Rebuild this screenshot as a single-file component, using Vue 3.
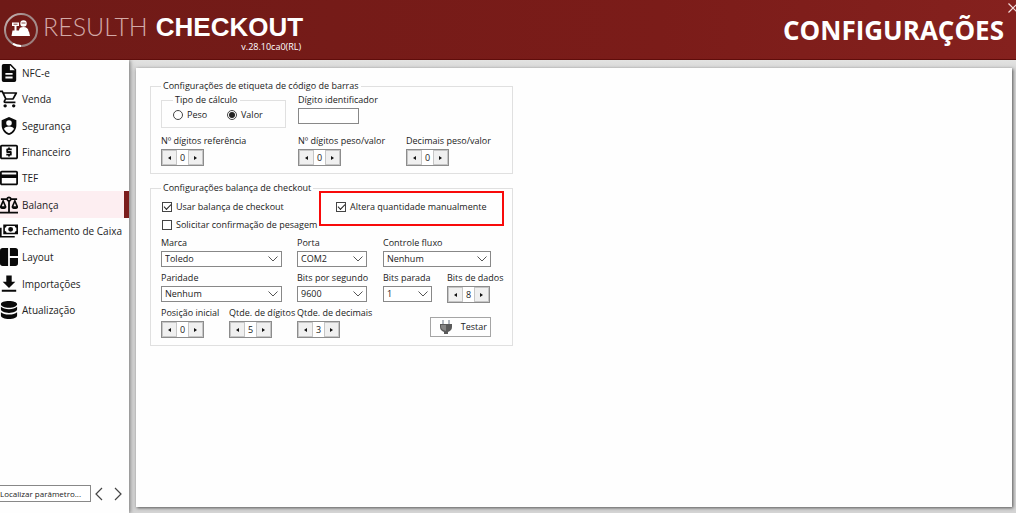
<script setup>
import { ref } from 'vue'

const items = [
  { label: 'NFC-e', box: '3 2 18 20', d: 'M14 2H6a2 2 0 0 0-2 2v16a2 2 0 0 0 2 2h12a2 2 0 0 0 2-2V8l-6-6zm2 16H8v-2h8v2zm0-4H8v-2h8v2zm-3-5V3.5L18.500 9H13z' },
  { label: 'Venda', box: '1 1.500 21 21', d: 'M15.550 13c.75 0 1.410-.41 1.750-1.030l3.580-6.490A.996.996 0 0 0 20.010 4H5.210l-.94-2H1v2h2l3.600 7.590-1.350 2.440C4.520 15.370 5.480 17 7 17h12v-2H7l1.100-2h7.450zM6.160 6h12.150l-2.760 5H8.530L6.160 6zM7 18a2 2 0 1 0 0 4 2 2 0 0 0 0-4zm10 0a2 2 0 1 0 0 4 2 2 0 0 0 0-4z' },
  { label: 'Segurança', box: '2 1 20 22', d: 'M12 1 3 5v6c0 5.550 3.840 10.740 9 12 5.160-1.260 9-6.450 9-12V5l-9-4m0 4a3.300 3.300 0 0 1 0 6.800A3.300 3.300 0 0 1 12 5m5.130 12A9.700 9.700 0 0 1 12 20.920 9.700 9.700 0 0 1 6.870 17c-.34-.5-.63-1-.87-1.530 0-1.650 2.710-3 6-3s6 1.320 6 3c-.24.53-.53 1.030-.87 1.530' },
  { label: 'Financeiro', box: '2 2 20 20', d: 'M11 17h2v-1h1c.55 0 1-.45 1-1v-3c0-.55-.45-1-1-1h-3v-1h4V8h-2V7h-2v1h-1c-.55 0-1 .45-1 1v3c0 .55.450 1 1 1h3v1H9v2h2v1zm9-13H4c-1.110 0-2 .89-2 2v12c0 1.110.890 2 2 2h16c1.110 0 2-.89 2-2V6c0-1.110-.89-2-2-2zm0 14H4V6h16v12z' },
  { label: 'TEF', box: '2 2 20 20', d: 'M20 4H4c-1.110 0-2 .89-2 2v12c0 1.110.890 2 2 2h16c1.110 0 2-.89 2-2V6c0-1.110-.89-2-2-2zm0 14H4v-6h16v6zm0-10H4V6h16v2z' },
  { label: 'Balança', box: '2 2.500 20 20', d: 'M12 3c-1.270 0-2.400.8-2.820 2H3v2h1.950L2 14c-.47 2 1 3 3.500 3S9.560 16 9 14L6.050 7h3.120c.33.85.98 1.500 1.830 1.830V20H2v2h20v-2h-9V8.820c.85-.32 1.500-.97 1.820-1.820h3.130L15 14c-.47 2 1 3 3.500 3s4.060-1 3.500-3l-2.950-7H21V5h-6.170C14.400 3.800 13.270 3 12 3m0 2a1 1 0 1 1 0 2 1 1 0 0 1 0-2m-6.500 5.250L7 14H4l1.500-3.750m13 0L20 14h-3l1.500-3.750z' },
  { label: 'Fechamento de Caixa', box: '1 3 22 22', d: 'M5 6h18v12H5V6m9 3a3 3 0 1 1 0 6 3 3 0 0 1 0-6M9 8a2 2 0 0 1-2 2v4a2 2 0 0 1 2 2h10a2 2 0 0 1 2-2v-4a2 2 0 0 1-2-2H9m-8 2h2v10h16v2H1V10z' },
  { label: 'Layout', box: '2 2 20 20', d: 'M5 2h6v20H5a3 3 0 0 1-3-3V5a3 3 0 0 1 3-3zm8 0h6a3 3 0 0 1 3 3v6h-9V2zm0 11h9v6a3 3 0 0 1-3 3h-6v-9z' },
  { label: 'Importações', box: '2 2 20 19', d: 'M4 20h16v-2H4v2zM19 9h-4V2H9v7H5l7 7 7-7z' },
  { label: 'Atualização', box: '2 2 20 20', d: 'M12 2c5 0 9 1.500 9 3.500S17 9.500 12 9.500 3 7.800 3 5.500 7 2 12 2zM3 8.500c2 1.800 5 2.600 9 2.600s7-.8 9-2.600v2.700c0 2.200-4 4-9 4s-9-1.800-9-4V8.500zm0 6c2 1.800 5 2.600 9 2.600s7-.8 9-2.600V18c0 2.300-4 4-9 4s-9-1.700-9-4v-3.500z' }
]
const active = ref('Balança')
const kind = ref('valor')
const useScale = ref(true)
const confirmWeight = ref(false)
const changeQty = ref(true)

const labelSpinners = ref([
  { id: 'ref', label: 'Nº dígitos referência', value: 0 },
  { id: 'pv', label: 'Nº dígitos peso/valor', value: 0 },
  { id: 'dec', label: 'Decimais peso/valor', value: 0 }
])
const fields = ref([
  { id: 'marca', type: 'select', label: 'Marca', value: 'Toledo' },
  { id: 'porta', type: 'select', label: 'Porta', value: 'COM2' },
  { id: 'fluxo', type: 'select', label: 'Controle fluxo', value: 'Nenhum' },
  { id: 'paridade', type: 'select', label: 'Paridade', value: 'Nenhum' },
  { id: 'bps', type: 'select', label: 'Bits por segundo', value: '9600' },
  { id: 'parada', type: 'select', label: 'Bits parada', value: '1' },
  { id: 'dados', type: 'spin', label: 'Bits de dados', value: 8 },
  { id: 'posicao', type: 'spin', label: 'Posição inicial', value: 0 },
  { id: 'digitos', type: 'spin', label: 'Qtde. de dígitos', value: 5 },
  { id: 'decimais', type: 'spin', label: 'Qtde. de decimais', value: 3 }
])
</script>

<template>
  <div class="app">
    <header class="top">
      <svg class="logo" viewBox="0 0 36 36" aria-hidden="true">
        <defs>
          <linearGradient id="ring" x1="0" y1="0" x2="1" y2="1">
            <stop offset="0" stop-color="#d5c5c4" />
            <stop offset=".35" stop-color="#9b8584" />
            <stop offset=".6" stop-color="#a58e8d" />
            <stop offset="1" stop-color="#967674" />
          </linearGradient>
        </defs>
        <circle cx="18" cy="18" r="16" fill="none" stroke="url(#ring)" stroke-width="2" />
        <path d="M10 31.800A16 16 0 0 0 18 34" fill="none" stroke="#fff" stroke-width="2" />
        <circle cx="20.500" cy="11.500" r="3.200" fill="#fff" />
        <path d="M9 10.500h7v3.500h-2.500v4.500H16c0-2.500 1.500-3.500 4.500-3.500s5 1.500 5 4.500h.5l1 4.500H8.500l1-5.500h2V14H9z" fill="#fff" />
        <path d="M10.500 12.200h4M18.500 11h4" stroke="#8a4b48" stroke-width="1" />
      </svg>
      <div class="brand">
        <div class="name"><span class="thin">RESULTH</span><strong>CHECKOUT</strong></div>
        <div class="version">v.28.10ca0(RL)</div>
      </div>
      <h1>CONFIGURAÇÕES</h1>
      <button class="close" type="button" aria-label="Fechar">
        <svg viewBox="0 0 10 10"><path d="M.5.5l9 9M9.500.5l-9 9" /></svg>
      </button>
    </header>

    <div class="body">
      <aside class="side">
        <nav>
          <a v-for="it in items" :key="it.label" href="#" :class="{ active: it.label === active }" @click.prevent="active = it.label">
            <svg :viewBox="it.box" aria-hidden="true"><path :d="it.d" fill-rule="evenodd" /></svg>
            <span>{{ it.label }}</span>
          </a>
        </nav>
        <div class="search">
          <input type="text" aria-label="Localizar parâmetro" placeholder="Localizar parâmetro..." />
          <button type="button" aria-label="Anterior"><svg viewBox="0 0 8 14"><path d="M7 1 1 7l6 6" /></svg></button>
          <button type="button" aria-label="Próximo"><svg viewBox="0 0 8 14"><path d="m1 1 6 6-6 6" /></svg></button>
        </div>
      </aside>

      <main class="panel">
        <fieldset class="group">
          <legend>Configurações de etiqueta de código de barras</legend>
          <div class="grid-tag">
            <fieldset class="kind">
              <legend>Tipo de cálculo</legend>
              <div class="radios">
                <label><input v-model="kind" type="radio" name="kind" value="peso" />Peso</label>
                <label><input v-model="kind" type="radio" name="kind" value="valor" />Valor</label>
              </div>
            </fieldset>
            <div class="field ident">
              <label for="ident">Dígito identificador</label>
              <input id="ident" class="box" type="text" />
            </div>
            <div v-for="f in labelSpinners" :key="f.id" class="field">
              <label :for="f.id">{{ f.label }}</label>
              <div class="spin">
                <button type="button" aria-label="Diminuir" @click="f.value--"><i class="left"></i></button>
                <input :id="f.id" v-model="f.value" type="text" />
                <button type="button" aria-label="Aumentar" @click="f.value++"><i class="right"></i></button>
              </div>
            </div>
          </div>
        </fieldset>

        <fieldset class="group">
          <legend>Configurações balança de checkout</legend>
          <div class="checks">
            <label><input v-model="useScale" type="checkbox" />Usar balança de checkout</label>
            <label class="marked"><input v-model="changeQty" type="checkbox" />Altera quantidade manualmente</label>
            <label><input v-model="confirmWeight" type="checkbox" />Solicitar confirmação de pesagem</label>
          </div>
          <div class="grid-scale">
            <div v-for="f in fields" :key="f.id" class="field" :class="f.id">
              <label :for="f.id">{{ f.label }}</label>
              <div v-if="f.type === 'select'" class="pick">
                <select :id="f.id" v-model="f.value" class="box"><option>{{ f.value }}</option></select>
                <svg viewBox="0 0 10 6" aria-hidden="true"><path d="m.5.5 4.500 4.500L9.500.5" /></svg>
              </div>
              <div v-else class="spin">
                <button type="button" aria-label="Diminuir" @click="f.value--"><i class="left"></i></button>
                <input :id="f.id" v-model="f.value" type="text" />
                <button type="button" aria-label="Aumentar" @click="f.value++"><i class="right"></i></button>
              </div>
            </div>
            <button class="test" type="button">
              <svg viewBox="0 0 12 16" aria-hidden="true">
                <path d="M3 1v5M9 1v5" stroke="#b4bac2" stroke-width="2" />
                <path d="M0 5h12v3c0 3-2 4-4 5v2H4v-2C2 12 0 11 0 8z" fill="#5a5a5a" />
                <path d="M1 6h5v6C3 11 1 10 1 8z" fill="#858585" />
              </svg>
              <span>Testar</span>
            </button>
          </div>
        </fieldset>
      </main>
    </div>
  </div>
</template>

<style>
body { margin: 0; }
</style>

<style scoped>
.app {
  min-height: 100vh;
  display: flex;
  flex-direction: column;
  font: 9px/12px "Open Sans", "Noto Sans", sans-serif;
  color: #222;
  overflow: hidden;
}
* { box-sizing: border-box; }
button, input, select { font: inherit; color: inherit; margin: 0; padding: 0; }
label { white-space: nowrap; }
.top {
  position: relative;
  height: 60px;
  display: flex;
  align-items: center;
  padding: 0 12px 0 3px;
  color: #fff;
  background: linear-gradient(90deg, #6f1a17, #7b1c19 65%, #85211e);
  border-bottom: 1px solid #5f0d0b;
}
.logo { width: 36px; height: 36px; flex: none; }
.brand { margin: 8px 0 0 4px; }
.name { display: flex; align-items: baseline; gap: 8px; line-height: 26px; }
.thin { font: 300 25px/26px Lato, sans-serif; color: #d3a9a7; }
.name strong { font: bold 26px/26px "Liberation Sans", Arial, sans-serif; }
.version { font-size: 9px; line-height: 14px; text-align: right; padding-right: 2px; }
h1 { margin: 0 0 0 auto; font: bold 26px/36px "Open Sans", "Noto Sans", sans-serif; }
.close { position: absolute; top: 3px; right: -2px; width: 10px; height: 10px; border: 0; background: none; display: flex; }
.close svg { width: 10px; height: 10px; fill: none; stroke: #f3dddd; stroke-width: 1.2; }
.body { flex: 1; display: flex; background: linear-gradient(#e3e3e2, #d4d4d4 12px, #d4d4d4); }
.side {
  width: 129px;
  flex: none;
  display: flex;
  flex-direction: column;
  justify-content: space-between;
  background: #fefefe;
  box-shadow: 1px 0 4px #777;
}
nav { height: 263px; display: grid; grid-auto-rows: 1fr; }
nav a {
  display: flex;
  align-items: center;
  gap: 4px;
  font-size: 10px;
  line-height: 14px;
  color: #222;
  text-decoration: none;
  white-space: nowrap;
}
nav a.active { background: #fdeef1; border-right: 5px solid #7b1c1c; }
nav svg { width: 18px; height: 18px; fill: #0a0a0a; flex: none; }
.search { display: flex; align-items: center; gap: 11px; padding-bottom: 11px; }
.search input { width: 91px; height: 17px; font-size: 8px; border: 1px solid #888; border-left: 0; background: #fff; margin-right: -7px; }
.search input::placeholder { color: #222; opacity: 1; }
.search button { width: 8px; height: 14px; border: 0; background: none; display: flex; }
.search svg { width: 8px; height: 14px; fill: none; stroke: #444; stroke-width: 1.2; }
.panel {
  flex: 1;
  margin: 8px 4px 6px 7px;
  padding: 12px 14px;
  background: #fefefe;
  box-shadow: 1px 1px 3px #555;
}
.group {
  max-width: 363px;
  margin: 0 0 8px;
  padding: 0 10px 8px;
  border: 1px solid #e0e0e0;
}
.group + .group { margin: 0; }
legend { padding: 0 2px; height: 12px; }
.grid-tag { display: grid; grid-template-columns: 137px 108px 1fr; row-gap: 7px; padding-top: 2px; }
.kind {
  width: 125px;
  height: 34px;
  margin: 0;
  padding: 3px 11px 0;
  border: 1px solid #e0e0e0;
}
.radios { display: grid; grid-template-columns: 54px 1fr; }
.radios label { display: flex; align-items: center; gap: 4px; }
.field { display: flex; flex-direction: column; align-items: flex-start; gap: 2px; }
.ident { grid-column: 2 / 4; }
.box { height: 16px; border: 1px solid #888; border-radius: 0; background: #fff; }
.ident .box { width: 61px; }
input[type="radio"], input[type="checkbox"] {
  appearance: none;
  width: 10px;
  height: 10px;
  flex: none;
  border: 1px solid #444;
  background: #fff;
  display: grid;
  place-items: center;
}
input[type="radio"] { border-radius: 50%; }
input[type="radio"]:checked::after { content: ""; width: 6px; height: 6px; border-radius: 50%; background: #222; }
input[type="checkbox"]:checked::after {
  content: "";
  width: 6px;
  height: 3px;
  border: solid #222;
  border-width: 0 0 1px 1px;
  transform: rotate(-45deg);
  margin-bottom: 2px;
}
.spin {
  display: grid;
  grid-template-columns: 15px 11px 15px;
  width: 43px;
  height: 17px;
  border: 1px solid #8c8c8c;
  background: #fff;
}
.spin button { display: grid; place-items: center; border: 1px solid #c6c6c6; background: #f0f0f0; }
.spin input { width: 100%; min-width: 0; border: 0; background: none; text-align: center; }
.spin i { border: solid transparent; border-width: 2px 0; }
.spin .left { border-right: 3px solid #111; }
.spin .right { border-left: 3px solid #111; }
.field .spin { margin-bottom: -1px; }
.checks { display: grid; grid-template-columns: 174px 1fr; row-gap: 6px; padding: 7px 0 6px 1px; }
.checks label { display: flex; align-items: center; gap: 4px; }
.marked { position: relative; }
.marked::after {
  content: "";
  box-sizing: border-box;
  position: absolute;
  top: -10px;
  left: -17px;
  width: 185px;
  height: 35px;
  border: 2px solid #f80a0a;
}
.grid-scale { display: grid; grid-template-columns: 68px 68px 86px 64px minmax(0, 1fr); row-gap: 5px; }
.marca, .paridade { grid-column: 1 / 3; }
.fluxo { grid-column: 4 / 6; }
.pick { position: relative; width: 70px; }
.marca .pick, .paridade .pick { width: 121px; }
.fluxo .pick { width: 108px; }
.parada .pick { width: 49px; }
.pick select { appearance: none; display: block; width: 100%; padding-left: 3px; }
.pick svg { position: absolute; right: 4px; top: 5px; width: 10px; height: 6px; fill: none; stroke: #555; pointer-events: none; }
.test {
  grid-column: 4 / 6;
  justify-self: start;
  align-self: end;
  display: flex;
  align-items: center;
  justify-content: space-between;
  width: 61px;
  height: 20px;
  margin-left: 47px;
  padding: 0 3px 0 9px;
  border: 1px solid #a5a5a5;
  background: #fefefe;
}
.test svg { width: 12px; height: 16px; }
</style>
